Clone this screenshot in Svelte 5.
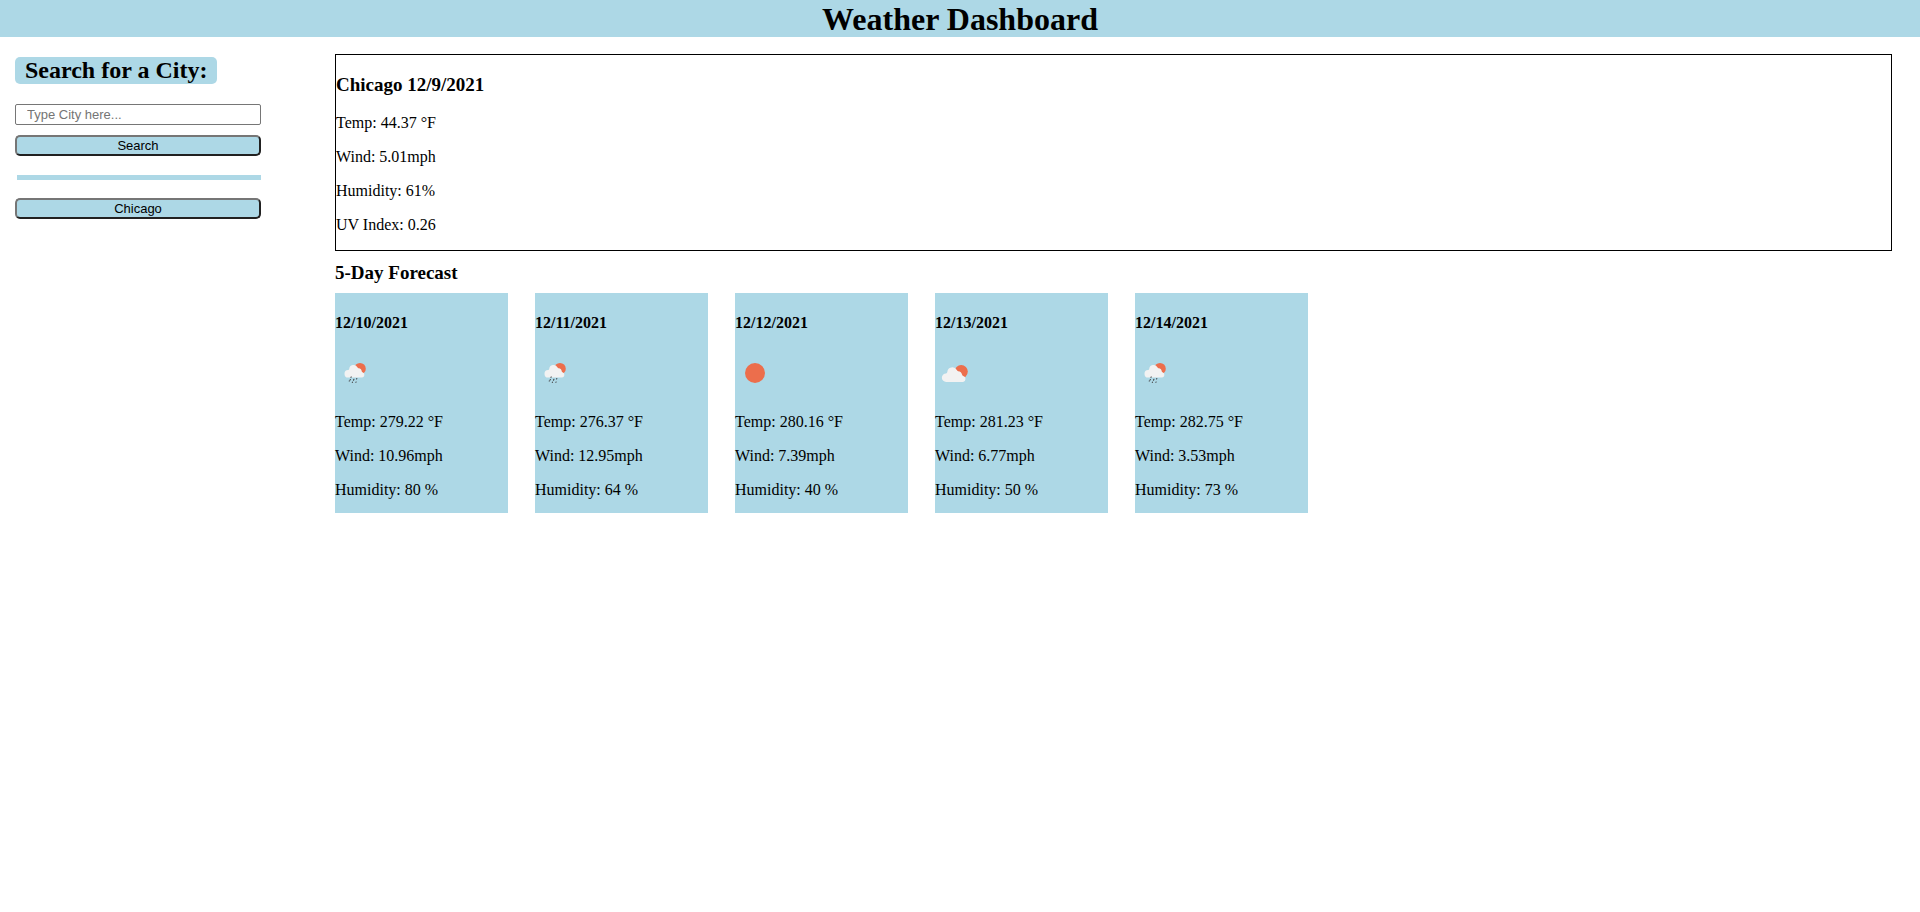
<script>
  let city = $state('');
  let history = $state(['Chicago']);

  const current = [
    'Temp: 44.37 °F',
    'Wind: 5.01mph',
    'Humidity: 61%',
    'UV Index: 0.26'
  ];

  const days = [
    { date: '12/10/2021', icon: 'rain', temp: '279.22', wind: '10.96', humidity: 80 },
    { date: '12/11/2021', icon: 'rain', temp: '276.37', wind: '12.95', humidity: 64 },
    { date: '12/12/2021', icon: 'clear', temp: '280.16', wind: '7.39', humidity: 40 },
    { date: '12/13/2021', icon: 'clouds', temp: '281.23', wind: '6.77', humidity: 50 },
    { date: '12/14/2021', icon: 'rain', temp: '282.75', wind: '3.53', humidity: 73 }
  ];

  function search(event) {
    event.preventDefault();
    const name = city.trim();
    if (name && !history.includes(name)) history.push(name);
    city = '';
  }
</script>

<header><h1>Weather Dashboard</h1></header>

<div class="layout">
  <aside>
    <form onsubmit={search}>
      <h2><label for="city">Search for a City:</label></h2>
      <input id="city" type="text" placeholder="Type City here..." bind:value={city} />
      <button type="submit">Search</button>
    </form>
    <hr />
    <div class="history">
      {#each history as name}
        <button type="button">{name}</button>
      {/each}
    </div>
  </aside>

  <main>
    <section class="current">
      <h3>Chicago 12/9/2021</h3>
      {#each current as line}
        <p>{line}</p>
      {/each}
    </section>

    <h3 class="forecast-title">5-Day Forecast</h3>
    <section class="forecast">
      {#each days as day}
        <article>
          <h4>{day.date}</h4>
          <svg viewBox="0 0 40 40" aria-hidden="true">
            {#if day.icon === 'clear'}
              <circle cx="20" cy="20" r="10" fill="#ec6e4c" />
            {:else if day.icon === 'clouds'}
              <circle cx="26.2" cy="18.6" r="6.6" fill="#ec6e4c" />
              <path
                fill="#f2f2f2"
                d="M11.3 29a4.3 4.3 0 0 1-.3-8.6 1.6 1.6 0 0 0 1.3-1.3 5 5 0 0 1 9.500-2c.4.7.7 1 1.300 1.100 2.300.2 3.700 1.600 4 3.600.1.700.5 1 1.200 1.200a3.100 3.100 0 0 1-.2 6z"
              />
            {:else}
              <circle cx="25" cy="15.700" r="5.800" fill="#ec6e4c" />
              <path
                fill="#f2f2f2"
                d="M13.300 24.500a3.700 3.700 0 0 1-.2-7.400 1.400 1.400 0 0 0 1.100-1.100 4.400 4.400 0 0 1 8.200-1.800c.4.6.7.9 1.200 1 2 .2 3 1.400 3.200 3.200.1.500.3.800.8.900a2.700 2.700 0 0 1-.4 5.200z"
              />
              <g stroke="#48484a" stroke-width="1.1" stroke-linecap="round">
                <path d="M16.200 23.900l-.2.500M18.900 26.200l-.4 1M15.400 26.500l-.3.500M21.800 25.600l-.2.400M17.500 29.200l-.2.200M21.100 29l-.2.300M14.300 27.900l-.1.200" />
              </g>
            {/if}
          </svg>
          <p>Temp: {day.temp} °F</p>
          <p>Wind: {day.wind}mph</p>
          <p>Humidity: {day.humidity} %</p>
        </article>
      {/each}
    </section>
  </main>
</div>

<style>
  :global(body) {
    margin: 0;
    background: #fff;
    color: #000;
    font: 16px/18px 'Liberation Serif', 'Times New Roman', serif;
  }

  header {
    padding-top: 1px;
    background: lightblue;
    text-align: center;
  }

  h1 {
    margin: 0;
    font-size: 32px;
    line-height: 36px;
  }

  .layout {
    display: flex;
    gap: 74px;
    padding: 17px 28px 0 15px;
  }

  aside {
    flex: none;
    width: 246px;
    padding-top: 3px;
  }

  form,
  .history {
    display: flex;
    flex-direction: column;
    gap: 10px;
  }

  h2 {
    align-self: flex-start;
    margin: 0 0 10px;
    padding: 0 10px;
    border-radius: 5px;
    background: lightblue;
    font-size: 24px;
    line-height: 27px;
  }

  input,
  button {
    box-sizing: border-box;
    width: 100%;
    height: 21px;
    font: 13px/15px 'Liberation Sans', Arial, sans-serif;
  }

  input {
    margin: 0;
    padding: 1px 11px;
    border: 1px solid #767676;
    border-radius: 2px;
    background: #fff;
  }

  input::placeholder {
    color: #757575;
    opacity: 1;
  }

  button {
    margin: 0;
    padding: 0 6px;
    border: 2px solid;
    border-color: #767676 #212121 #212121 #767676;
    border-radius: 5px;
    background: lightblue;
    color: #000;
  }

  hr {
    height: 5px;
    margin: 19px 0 18px 2px;
    border: 0;
    background: lightblue;
  }

  main {
    flex: 1;
    min-width: 0;
  }

  h3 {
    margin: 19px 0;
    font-size: 19px;
    line-height: 21px;
  }

  h4 {
    margin: 21px 0;
    font-size: 16px;
  }

  p {
    margin: 16px 0;
  }

  .current {
    display: flow-root;
    border: 1px solid #000;
  }

  .forecast-title {
    margin: 11px 0 10px;
  }

  .forecast {
    display: flex;
    flex-wrap: wrap;
    gap: 27px;
  }

  article {
    display: flow-root;
    width: 173px;
    background: lightblue;
  }

  article svg {
    display: block;
    width: 40px;
    height: 40px;
    margin-bottom: 20px;
  }

  article p:last-child {
    margin-bottom: 14px;
  }
</style>
